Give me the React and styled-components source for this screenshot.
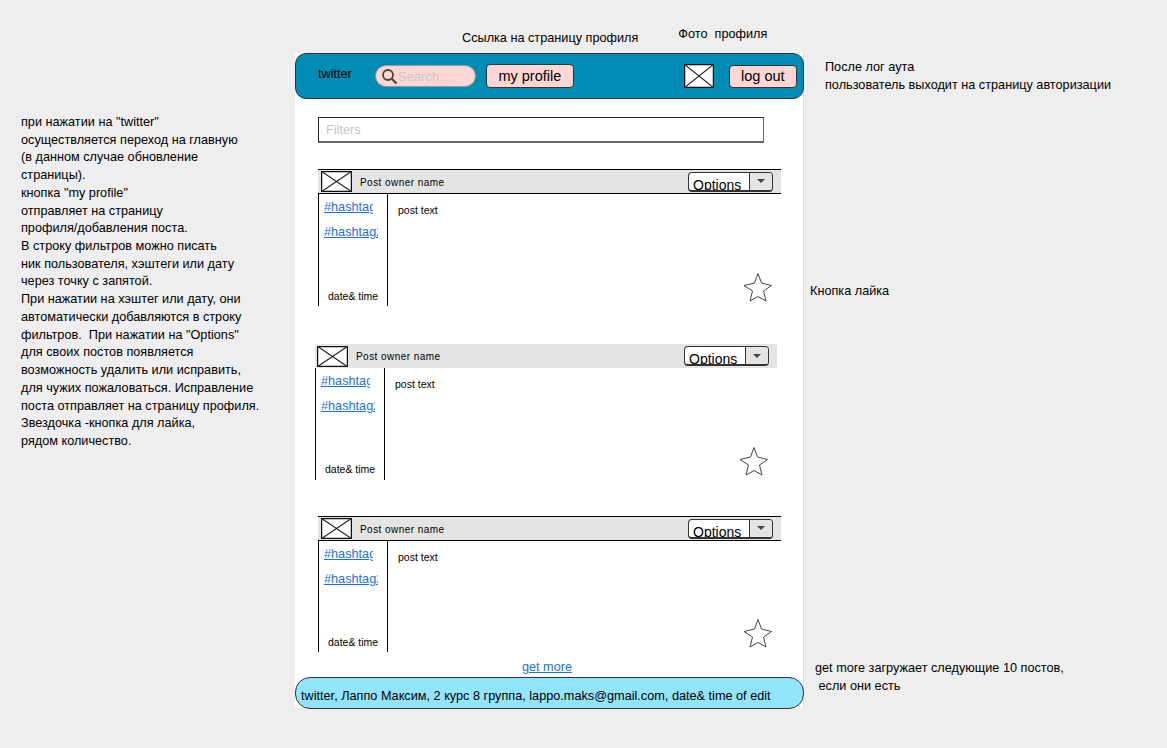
import React from 'react';
import styled, {createGlobalStyle} from 'styled-components';

const GlobalStyle = createGlobalStyle`
    html, body {
        margin: 0;
        padding: 0;
        background: #eeeeee;
        font-family: "Liberation Sans", Arial, sans-serif;
        color: #000;
    }
`;

const Canvas = styled.div`
    display: grid;
    grid-template-columns: 295px 509px 1fr;
    width: 1167px;
    height: 748px;
    overflow: hidden;
`;

const LeftNotes = styled.div`
    padding: 114px 0 0 21px;
    font-size: 12.7px;
    line-height: 17.72px;
    white-space: pre;
`;

const RightNotes = styled.div`
    display: flex;
    flex-direction: column;
    font-size: 12.7px;
    white-space: pre;
`;

const Note = styled.div`
    margin-top: ${props => props.$top}px;
    margin-left: ${props => props.$left}px;
    line-height: ${props => props.$line || 18}px;
`;

const Middle = styled.div`
    display: flex;
    flex-direction: column;
`;

const Captions = styled.div`
    height: 53px;
    font-size: 12.7px;
    display: flex;
    white-space: pre;
`;

const Caption = styled.div`
    margin-left: ${props => props.$left}px;
    margin-top: ${props => props.$top}px;
`;

const Panel = styled.div`
    width: 508px;
    height: 655px;
    background: #fff;
    box-shadow: 1px 0 0 #dcdcdc;
    display: flex;
    flex-direction: column;
`;

const TopBar = styled.div`
    box-sizing: border-box;
    width: 509px;
    height: 46px;
    background: #008cb4;
    border: 1px solid #333;
    border-radius: 11px;
    display: flex;
    align-items: center;
    flex: none;
    margin-bottom: 18px;
`;

const Logo = styled.div`
    font-size: 12.7px;
    margin: 0 23px 0 22px;
    position: relative;
    top: -2px;
`;

const SearchBox = styled.div`
    box-sizing: border-box;
    width: 101px;
    height: 22px;
    background: #ffd6d3;
    border: 1px solid #999;
    border-radius: 11px;
    display: flex;
    align-items: center;
    padding-left: 5px;
    color: #c8c8c8;
    font-size: 13px;
`;

const PinkButton = styled.div`
    box-sizing: border-box;
    height: ${props => props.$h}px;
    width: ${props => props.$w}px;
    margin-left: ${props => props.$left}px;
    background: #ffd6d3;
    border: 1px solid #333;
    border-radius: 4px;
    font-size: 14.5px;
    display: flex;
    align-items: center;
    justify-content: center;
`;

const PlaceholderBox = styled.svg`
    display: block;
    flex: none;
    margin-left: ${props => props.$left || 0}px;
`;

const Placeholder = ({w, h, left}) => (
    <PlaceholderBox $left={left} width={w} height={h} viewBox={`0 0 ${w} ${h}`}>
        <rect x="0.5" y="0.5" width={w - 1} height={h - 1} fill="#fff" stroke="#111" strokeWidth="1.5"/>
        <path d={`M0 0 L${w} ${h} M${w} 0 L0 ${h}`} stroke="#222" strokeWidth="1.1" fill="none"/>
    </PlaceholderBox>
);

const FilterInput = styled.div`
    box-sizing: border-box;
    flex: none;
    width: 446px;
    height: 26px;
    margin-left: 23px;
    border: 1px solid #222;
    border-right-color: #666;
    border-bottom: 2px solid #666;
    padding-left: 7px;
    font-size: 12.7px;
    line-height: 25px;
    color: #c4c4c4;
`;

const Post = styled.div`
    box-sizing: border-box;
    flex: none;
    width: ${props => props.$lined ? 463 : 462}px;
    height: ${props => props.$h}px;
    margin-left: ${props => props.$left}px;
    margin-top: ${props => props.$top}px;
    display: flex;
    flex-direction: column;
`;

const PostHead = styled.div`
    box-sizing: border-box;
    height: ${props => props.$lined ? 25 : 24}px;
    flex: none;
    background: #e4e4e4;
    border-top: 1px solid ${props => props.$lined ? '#000' : '#e4e4e4'};
    border-bottom: 1px solid ${props => props.$lined ? '#000' : '#e4e4e4'};
    display: flex;
    align-items: center;
    padding-left: ${props => props.$lined ? 3 : 2}px;
    font-size: 10px;
`;

const OwnerName = styled.div`
    margin-left: 8px;
    padding-top: 1px;
    letter-spacing: 0.45px;
    white-space: pre;
`;

const OptionsButton = styled.div`
    box-sizing: border-box;
    width: 85px;
    height: 20px;
    margin-left: auto;
    margin-right: 8px;
    background: #fff;
    border: 1px solid #333;
    border-bottom-width: 2px;
    border-radius: 4px;
    display: flex;
    overflow: hidden;
    font-size: 14px;
`;

const OptionsLabel = styled.div`
    width: 60px;
    box-sizing: border-box;
    padding: 4px 0 0 4px;
    line-height: 16px;
`;

const OptionsArrow = styled.div`
    flex: 1;
    background: #e4e4e4;
    border-left: 1px solid #333;
    display: flex;
    align-items: center;
    justify-content: center;
    &::after {
        content: "";
        border-top: 4px solid #444;
        border-left: 4px solid transparent;
        border-right: 4px solid transparent;
    }
`;

const PostBody = styled.div`
    flex: 1;
    display: grid;
    grid-template-columns: 70px 1fr;
    min-height: 0;
`;

const TagColumn = styled.div`
    box-sizing: border-box;
    border-left: 1px solid #000;
    border-right: 1px solid #000;
    display: flex;
    flex-direction: column;
    padding-left: 5px;
`;

const Tag = styled.a`
    display: block;
    width: ${props => props.$w}px;
    overflow: hidden;
    white-space: nowrap;
    font-size: 12.7px;
    line-height: 15px;
    margin-top: ${props => props.$top}px;
    color: #1e6fe0;
    text-decoration: underline;
`;

const PostDate = styled.div`
    margin-top: auto;
    margin-bottom: ${props => props.$bottom}px;
    margin-left: 4px;
    font-size: 10.5px;
    line-height: 13px;
    white-space: pre;
`;

const PostMain = styled.div`
    position: relative;
    padding: 10px 0 0 10px;
    font-size: 10.5px;
    line-height: 12px;
`;

const StarIcon = styled.svg`
    position: absolute;
    right: 8px;
    bottom: 3px;
`;

const GetMore = styled.a`
    flex: none;
    text-align: center;
    font-size: 12.7px;
    line-height: 14px;
    margin-top: 8px;
    padding-right: 4px;
    color: #1e6fe0;
    text-decoration: underline;
`;

const Footer = styled.div`
    box-sizing: border-box;
    flex: none;
    width: 509px;
    height: 32px;
    margin-top: 3px;
    background: #92e4fb;
    border: 1px solid #333;
    border-radius: 15px;
    padding-left: 5px;
    font-size: 12.7px;
    line-height: 36px;
    white-space: pre;
    overflow: hidden;
`;

const PostCard = ({left, top, lined, h, dateBottom}) => (
    <Post $left={left} $top={top} $h={h} $lined={lined}>
        <PostHead $lined={lined}>
            <Placeholder w={31} h={21}/>
            <OwnerName>Post owner name</OwnerName>
            <OptionsButton>
                <OptionsLabel>Options</OptionsLabel>
                <OptionsArrow/>
            </OptionsButton>
        </PostHead>
        <PostBody>
            <TagColumn>
                <Tag $w={49} $top={6}>#hashtag</Tag>
                <Tag $w={54} $top={10}>#hashtag2</Tag>
                <PostDate $bottom={dateBottom}>date&amp; time</PostDate>
            </TagColumn>
            <PostMain>
                post text
                <StarIcon width="30" height="30" viewBox="0 0 30 30">
                    <path d="M15 0.5 L18.5 10 L28.5 12.5 L20.5 18 L23 28 L15 23.5 L7 28 L9.5 18 L1 12.5 L11.5 10 Z"
                          fill="#fff" stroke="#444" strokeWidth="1"/>
                </StarIcon>
            </PostMain>
        </PostBody>
    </Post>
);

const leftText = `при нажатии на "twitter"
осуществляется переход на главную
(в данном случае обновление
страницы).
кнопка "my profile"
отправляет на страницу
профиля/добавления поста.
В строку фильтров можно писать
ник пользователя, хэштеги или дату
через точку с запятой.
При нажатии на хэштег или дату, они
автоматически добавляются в строку
фильтров.  При нажатии на "Options"
для своих постов появляется
возможность удалить или исправить,
для чужих пожаловаться. Исправление
поста отправляет на страницу профиля.
Звездочка -кнопка для лайка,
рядом количество.`;

export default function App() {
    return (
        <Canvas>
            <GlobalStyle/>
            <LeftNotes>{leftText}</LeftNotes>
            <Middle>
                <Captions>
                    <Caption $left={167} $top={31}>Ссылка на страницу профиля</Caption>
                    <Caption $left={40} $top={27}>Фото  профиля</Caption>
                </Captions>
                <Panel>
                    <TopBar>
                        <Logo>twitter</Logo>
                        <SearchBox>
                            <svg width="17" height="17" viewBox="0 0 17 17">
                                <circle cx="7" cy="7" r="5" fill="none" stroke="#444" strokeWidth="1.8"/>
                                <path d="M10.8 10.8 L15.5 15.5" stroke="#444" strokeWidth="2.2"/>
                            </svg>
                            Search...
                        </SearchBox>
                        <PinkButton $w={88} $h={24} $left={10}>my profile</PinkButton>
                        <Placeholder w={30} h={24} left={110}/>
                        <PinkButton $w={68} $h={23} $left={15}>log out</PinkButton>
                    </TopBar>
                    <FilterInput>Filters</FilterInput>
                    <PostCard left={23} top={26} lined h={137} dateBottom={3}/>
                    <PostCard left={20} top={38} h={136} dateBottom={4}/>
                    <PostCard left={23} top={36} lined h={136} dateBottom={3}/>
                    <GetMore>get more</GetMore>
                    <Footer>twitter, Лаппо Максим, 2 курс 8 группа, lappo.maks@gmail.com, date&amp; time of edit</Footer>
                </Panel>
            </Middle>
            <RightNotes>
                <Note $top={58} $left={21}>{'После лог аута\nпользователь выходит на страницу авторизации'}</Note>
                <Note $top={188} $left={6}>Кнопка лайка</Note>
                <Note $top={359} $left={11} $line={18}>{'get more загружает следующие 10 постов,\n если они есть'}</Note>
            </RightNotes>
        </Canvas>
    );
}
